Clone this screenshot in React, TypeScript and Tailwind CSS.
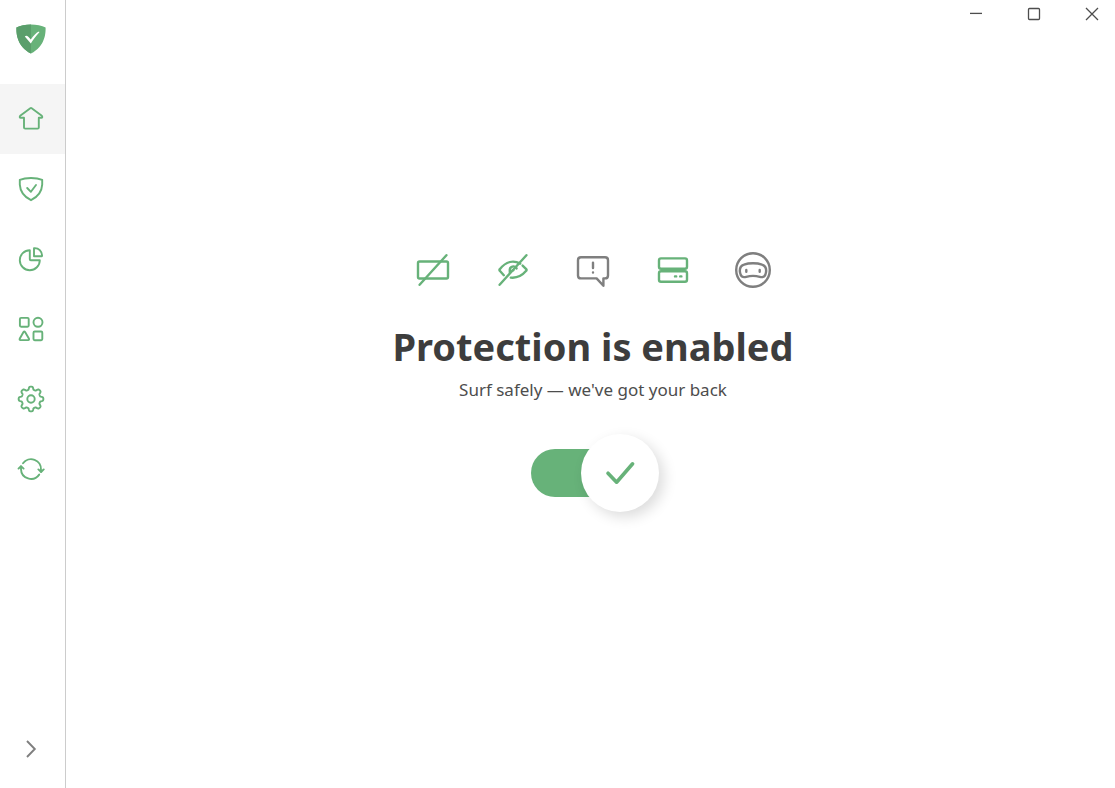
import { useState, ReactNode } from "react";

type NavItem = {
  id: string;
  label: string;
  icon: ReactNode;
};

type Feature = {
  id: string;
  label: string;
  enabled: boolean;
  icon: ReactNode;
};

// Outline of the settings cog: eight rounded teeth around (14, 14)
const getCogPath = () => {
  const points: string[] = [];
  for (let i = 0; i < 160; i++) {
    const angle = (i / 160) * Math.PI * 2;
    const radius = 10.9 + 1.5 * Math.tanh(2 * Math.cos(angle * 8));
    const x = 14 + radius * Math.sin(angle);
    const y = 14 - radius * Math.cos(angle);
    points.push(`${x.toFixed(2)} ${y.toFixed(2)}`);
  }
  return `M${points.join("L")}Z`;
};

const navItems: NavItem[] = [
  {
    id: "home",
    label: "Home",
    icon: (
      <path d="M13.3 3.2Q14 2.7 14.7 3.2L24.8 10.7Q26 12.6 24.2 12.8H21.8V22.4Q21.8 23.6 20.6 23.6H8.2Q7 23.6 7 22.4V12.8H3.8Q2 12.6 3.2 10.7Z" />
    ),
  },
  {
    id: "protection",
    label: "Protection",
    icon: (
      <>
        <path d="M14 3C18 3 22 3.5 25.2 4.8V9.6C24.8 16.8 20.4 22 14 25.2C7.6 22 3.2 16.8 2.8 9.6V4.8C6 3.5 10 3 14 3Z" />
        <path d="M10.2 13L13.9 16.8L19 10" />
      </>
    ),
  },
  {
    id: "statistics",
    label: "Statistics",
    icon: (
      <>
        <path d="M12.8 5.2A10 10 0 1 0 22.8 15.2H13.8Q12.8 15.2 12.8 14.2Z" />
        <path d="M17 3.2V11.2H25Q25.4 8 22.8 5.2Q20.4 2.8 17 3.2Z" />
      </>
    ),
  },
  {
    id: "apps",
    label: "Apps",
    icon: (
      <>
        <rect x="2.9" y="2.9" width="8.8" height="8.8" rx="1.2" />
        <circle cx="21" cy="7.3" r="4.5" />
        <path d="M6.5 17Q7.3 15.9 8.1 17L12 23.8Q12.3 25.1 11.2 25.1H3.4Q2.3 25.1 2.7 23.8Z" />
        <rect x="16.5" y="16.5" width="8.8" height="8.8" rx="1.2" />
      </>
    ),
  },
  {
    id: "settings",
    label: "Settings",
    icon: (
      <>
        <path d={getCogPath()} />
        <circle cx="14" cy="14" r="3.7" />
      </>
    ),
  },
  {
    id: "updates",
    label: "Updates",
    icon: (
      <>
        <path d="M6 8.2A10 10 0 0 1 24 15V16.6" />
        <path d="M21.4 14.4L24.1 17L26.7 14.4" />
        <path d="M22.2 19.6A10 10 0 0 1 4 14V11.6" />
        <path d="M1.5 13.6L4 11.1L6.6 13.6" />
      </>
    ),
  },
];

const features: Feature[] = [
  {
    id: "ads",
    label: "Ad blocking",
    enabled: true,
    icon: (
      <>
        <rect x="5" y="11.5" width="30" height="17" rx="1.5" />
        <path d="M6.6 34.8L33.4 5.2" />
      </>
    ),
  },
  {
    id: "tracking",
    label: "Tracking protection",
    enabled: true,
    icon: (
      <>
        <path d="M10.8 25.2L6.8 20.8Q6 20 6.8 19.2C13 11.4 20.5 9.8 27.2 13.6" />
        <path d="M29.6 15.6L33.2 19.2Q34 20 33.2 20.8C28.6 26.2 23.4 28.2 17.8 27.6" />
        <path d="M16.8 22.2V20.4A3.6 3.6 0 0 1 23.6 18.4" />
        <path d="M19.8 20.2H20.2" />
        <path d="M6.6 34.8L33.4 5.2" />
      </>
    ),
  },
  {
    id: "annoyances",
    label: "Annoyance blocking",
    enabled: false,
    icon: (
      <>
        <path d="M8 7.2H32Q35 7.2 35 10.2V25.4Q35 28.4 32 28.4H30.4V35.8L23.6 28.4H8Q5 28.4 5 25.4V10.2Q5 7.2 8 7.2Z" />
        <path d="M20 12.6V18M20 22.4V22.5" />
      </>
    ),
  },
  {
    id: "dns",
    label: "DNS protection",
    enabled: true,
    icon: (
      <>
        <rect x="6" y="8.4" width="28" height="10.4" rx="2" />
        <rect x="6" y="21.2" width="28" height="10.6" rx="2" />
        <path d="M22 26.4H23.2M27.2 26.4H28.4" />
      </>
    ),
  },
  {
    id: "stealth",
    label: "Stealth mode",
    enabled: false,
    icon: (
      <>
        <circle cx="20" cy="20" r="16.8" />
        <path d="M11 14.6C16 12.8 24 12.8 29 14.6C32 15.6 33.6 18.6 33 22.4C32.4 26.6 30.4 27.8 26.8 26.8C21.8 25.4 18.2 25.4 13.2 26.8C9.6 27.8 7.6 26.6 7 22.4C6.4 18.6 8 15.6 11 14.6Z" />
        <path d="M13.3 20V21.8M26.7 20V21.8" />
      </>
    ),
  },
];

function Logo() {
  return (
    <svg className="h-[30px] w-[30px]" viewBox="0 0 30 30" aria-hidden="true">
      <path
        d="M15 0.4C9.8 0.4 4 1.6 0.4 3.4C0.4 7.4 -0.2 21.4 15 29.6C30.2 21.4 29.6 7.4 29.6 3.4C26 1.6 20.2 0.4 15 0.4Z"
        fill="#67b279"
      />
      <path d="M15 0.4C9.8 0.4 4 1.6 0.4 3.4C0.4 7.4 -0.2 21.4 15 29.6Z" fill="#5a9e6b" />
      <path
        d="M8.8 12.4C10.6 10.8 12.2 12.2 14.8 15.6C17.4 11.8 20.4 8.4 23 7.6L23.4 8.2C20 11.8 17.4 15.2 14.8 19.6Z"
        fill="#fff"
      />
    </svg>
  );
}

function Sidebar() {
  const [activeTab, setActiveTab] = useState("home");

  return (
    <aside className="flex w-[66px] shrink-0 flex-col border-r border-[#cccccc]">
      <div className="flex h-[84px] items-start justify-center pt-6 pr-[3px]">
        <Logo />
      </div>
      <nav>
        {navItems.map((item) => (
          <button
            key={item.id}
            aria-label={item.label}
            onClick={() => setActiveTab(item.id)}
            className={`flex h-[70px] w-full items-center justify-center pr-[3px] ${
              activeTab === item.id ? "bg-[#f5f5f5]" : "hover:bg-[#fafafa]"
            }`}
          >
            <svg
              className="h-7 w-7 text-[#67b279]"
              viewBox="0 0 28 28"
              fill="none"
              stroke="currentColor"
              strokeWidth="1.9"
              strokeLinecap="round"
              strokeLinejoin="round"
            >
              {item.icon}
            </svg>
          </button>
        ))}
      </nav>
      <button
        aria-label="Expand menu"
        className="mt-auto mb-1 flex h-[70px] w-full items-center justify-center pr-[3px] text-[#7f7f7f]"
      >
        <svg className="h-5 w-5" viewBox="0 0 20 20" fill="none" stroke="currentColor" strokeWidth="1.9">
          <path d="M6 2L13.8 10L6 18" />
        </svg>
      </button>
    </aside>
  );
}

function WindowControls() {
  return (
    <header className="flex h-7 justify-end gap-3 text-[#4d4d4d]">
      <button aria-label="Minimize" className="flex w-[46px] items-center justify-center">
        <svg className="h-4 w-4" viewBox="0 0 16 16" fill="none" stroke="currentColor" strokeWidth="1.3">
          <path d="M2 7.4H14" />
        </svg>
      </button>
      <button aria-label="Maximize" className="flex w-[46px] items-center justify-center">
        <svg className="h-4 w-4" viewBox="0 0 16 16" fill="none" stroke="currentColor" strokeWidth="1.3">
          <rect x="2.5" y="2.5" width="11" height="11" rx="1" />
        </svg>
      </button>
      <button aria-label="Close" className="flex w-[46px] items-center justify-center">
        <svg className="h-4 w-4" viewBox="0 0 16 16" fill="none" stroke="currentColor" strokeWidth="1.3">
          <path d="M2 2L14 14M14 2L2 14" />
        </svg>
      </button>
    </header>
  );
}

function ProtectionToggle() {
  const [isEnabled, setIsEnabled] = useState(true);

  return (
    <label className="relative ml-1 flex h-[78px] w-32 cursor-pointer items-center">
      <input
        type="checkbox"
        role="switch"
        aria-label="Protection"
        checked={isEnabled}
        onChange={() => setIsEnabled(!isEnabled)}
        className="h-12 w-28 appearance-none rounded-full bg-[#c4c4c4] checked:bg-[#67b279]"
      />
      {/* Knob */}
      <span
        className={`absolute top-0 flex h-[78px] w-[78px] items-center justify-center rounded-full bg-white shadow-[5px_5px_14px_rgba(0,0,0,0.14)] ${
          isEnabled ? "right-0" : "left-0"
        }`}
      >
        {isEnabled && (
          <svg
            className="h-8 w-8 text-[#67b279]"
            viewBox="0 0 32 32"
            fill="none"
            stroke="currentColor"
            strokeWidth="3.6"
            strokeLinecap="round"
            strokeLinejoin="round"
          >
            <path d="M4 16.2L12.6 25.2L28.6 6.8" />
          </svg>
        )}
      </span>
    </label>
  );
}

export default function App() {
  return (
    <div className="flex min-h-screen bg-white font-['Noto_Sans','Open_Sans',sans-serif]">
      <Sidebar />
      <div className="flex flex-1 flex-col">
        <WindowControls />
        <main className="flex flex-1 flex-col items-center justify-center pb-[54px] pl-[5px]">
          <div className="flex gap-10">
            {features.map((feature) => (
              <button
                key={feature.id}
                aria-label={feature.label}
                className={feature.enabled ? "text-[#67b279]" : "text-[#7f7f7f]"}
              >
                <svg
                  className="h-10 w-10"
                  viewBox="0 0 40 40"
                  fill="none"
                  stroke="currentColor"
                  strokeWidth="2.4"
                  strokeLinecap="round"
                  strokeLinejoin="round"
                >
                  {feature.icon}
                </svg>
              </button>
            ))}
          </div>
          <h1 className="mt-8 text-[38px] leading-[48px] font-bold text-[#3d3d3d]">
            Protection is enabled
          </h1>
          <p className="mt-2 mb-8 text-[17px] leading-6 text-[#4d4d4d]">
            Surf safely — we've got your back
          </p>
          <ProtectionToggle />
        </main>
      </div>
    </div>
  );
}
